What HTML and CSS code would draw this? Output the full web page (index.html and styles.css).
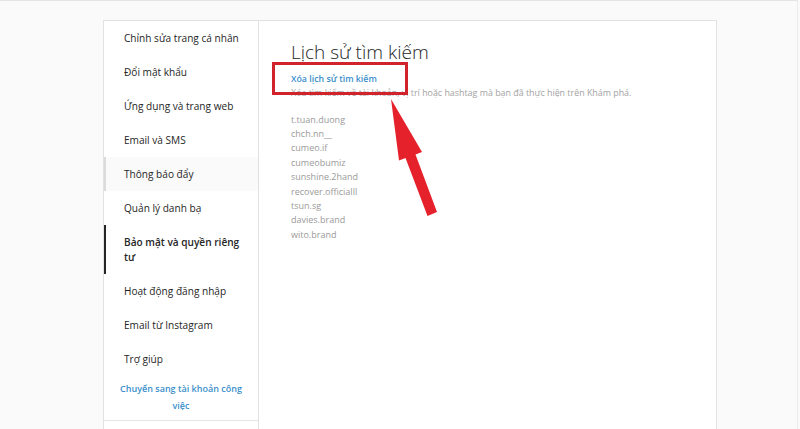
FILE: index.html
```html
<!DOCTYPE html>
<html lang="vi">
<head>
<meta charset="utf-8">
<title>Lịch sử tìm kiếm</title>
<link rel="stylesheet" href="styles.css">
</head>
<body>
<div class="page">
  <main class="card">
    <nav class="sidebar">
      <ul class="menu">
        <li class="item">Chỉnh sửa trang cá nhân</li>
        <li class="item">Đổi mật khẩu</li>
        <li class="item">Ứng dụng và trang web</li>
        <li class="item">Email và SMS</li>
        <li class="item hover">Thông báo đẩy</li>
        <li class="item">Quản lý danh bạ</li>
        <li class="item active">Bảo mật và quyền riêng tư</li>
        <li class="item">Hoạt động đăng nhập</li>
        <li class="item">Email từ Instagram</li>
        <li class="item">Trợ giúp</li>
      </ul>
      <div class="switch">Chuyển sang tài khoản công việc</div>
      <div class="sidebar-foot"></div>
    </nav>
    <section class="content">
      <h1 class="title">Lịch sử tìm kiếm</h1>
      <a class="clear" href="#">Xóa lịch sử tìm kiếm</a>
      <p class="desc">Xóa tìm kiếm về tài khoản, vị trí hoặc hashtag mà bạn đã thực hiện trên Khám phá.</p>
      <ul class="history">
        <li>t.tuan.duong</li>
        <li>chch.nn__</li>
        <li>cumeo.if</li>
        <li>cumeobumiz</li>
        <li>sunshine.2hand</li>
        <li>recover.officialll</li>
        <li>tsun.sg</li>
        <li>davies.brand</li>
        <li>wito.brand</li>
      </ul>
    </section>
  </main>
  <svg class="annotation" width="800" height="429" viewBox="0 0 800 429">
    <rect x="273.5" y="63.5" width="133" height="30" fill="none" stroke="#d0232b" stroke-width="3"/>
    <polygon points="391,99 422,152 415.5,154.5 437,212 427.5,216 405.5,158 399,160.5" fill="#e5212b"/>
  </svg>
</div>
</body>
</html>
```

FILE: styles.css
```css
html, body {
  margin: 0;
  padding: 0;
}
body {
  background: #fafafa;
  font-family: "Open Sans", "Noto Sans", "Liberation Sans", sans-serif;
  color: #262626;
}
.page {
  position: relative;
  height: 428px;
  overflow: hidden;
  border-top: 1px solid #e4e4e4;
  border-right: 1px solid #ececec;
  width: 797px;
  padding-top: 19px;
}
.card {
  margin-left: 103px;
  width: 612px;
  height: 440px;
  background: #fff;
  border: 1px solid #e2e2e2;
  display: flex;
}
.sidebar {
  width: 154px;
  flex: none;
  border-right: 1px solid #e2e2e2;
}
.menu {
  list-style: none;
  margin: 0;
  padding: 0;
}
.item {
  font-size: 10.1px;
  line-height: 15px;
  padding: 9.5px 10px 9.5px 18px;
  border-left: 2px solid transparent;
  color: #262626;
}
.item.hover {
  background: #fafafa;
  border-left-color: #dbdbdb;
}
.item.active {
  font-weight: 600;
  border-left-color: #262626;
  padding-right: 14px;
}
.switch {
  text-align: center;
  color: #3b8fcc;
  font-weight: 600;
  font-size: 9px;
  line-height: 16.5px;
  padding: 5px 14px 6px;
}
.sidebar-foot {
  border-top: 1px solid #e6e6e6;
  height: 20px;
}
.content {
  flex: 1;
  padding: 18px 0 0 32px;
}
.title {
  margin: 0;
  font-size: 19px;
  font-weight: 300;
  line-height: 26px;
  color: #262626;
}
.clear {
  display: block;
  margin-top: 7.5px;
  font-size: 8.8px;
  line-height: 13px;
  font-weight: 600;
  color: #3b8fcc;
  text-decoration: none;
}
.desc {
  margin: 0;
  font-size: 8.9px;
  line-height: 13px;
  color: #a3a3a3;
}
.history {
  list-style: none;
  margin: 14px 0 0;
  padding: 0;
  font-size: 9px;
  line-height: 14.4px;
  color: #9a9a9a;
}
.annotation {
  position: absolute;
  top: -1px;
  left: 0;
  pointer-events: none;
}
```
